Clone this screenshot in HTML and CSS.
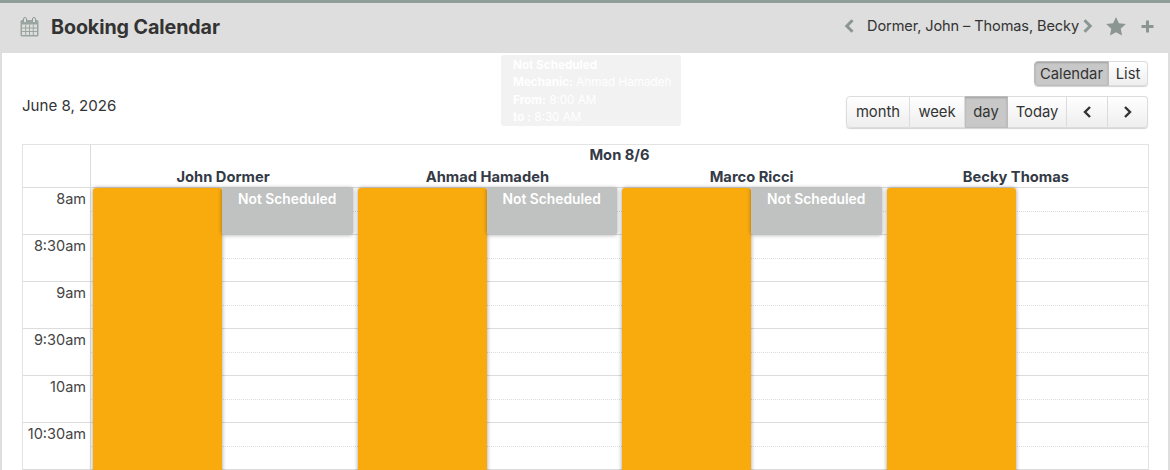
FILE: index.html
```html
<!DOCTYPE html>
<html lang="en">
<head>
<meta charset="utf-8">
<title>Booking Calendar</title>
<link rel="stylesheet" href="styles.css">
</head>
<body>
<header class="topbar">
  <div class="title">
    <svg class="cal-icon" width="19" height="20" viewBox="0 0 19 20">
      <rect x="0.5" y="3" width="18" height="16.5" rx="1.5" fill="#9aa5a0"/>
      <rect x="2" y="7.5" width="15" height="10.5" fill="#dedede"/>
      <path d="M2 11h15M2 14.500h15M5.700 7.500V18M9.500 7.500V18M13.300 7.500V18" stroke="#9aa5a0" stroke-width="1"/>
      <rect x="3.500" y="0.500" width="3" height="5.500" rx="1.500" fill="#dedede" stroke="#8f9b96"/>
      <rect x="12.500" y="0.500" width="3" height="5.500" rx="1.500" fill="#dedede" stroke="#8f9b96"/>
    </svg>
    <h1>Booking Calendar</h1>
  </div>
  <div class="range">
    <svg class="chev" width="10" height="14" viewBox="0 0 10 14"><path d="M8.500 1.200 2.800 7l5.700 5.800" fill="none" stroke="#8b9692" stroke-width="3"/></svg>
    <span class="range-text">Dormer, John – Thomas, Becky</span>
    <svg class="chev" width="10" height="14" viewBox="0 0 10 14"><path d="M1.500 1.200 7.200 7l-5.700 5.800" fill="none" stroke="#8b9692" stroke-width="3"/></svg>
    <svg class="star" width="20" height="19" viewBox="0 0 20 19"><path d="M10 0l2.900 6.300 6.900.8-5.100 4.700 1.400 6.800L10 15.200l-6.100 3.400 1.400-6.800L.2 7.100l6.900-.8z" fill="#8b9692"/></svg>
    <svg class="plus" width="13" height="13" viewBox="0 0 13 13"><path d="M6.500 0.500v12M0.500 6.500h12" stroke="#8b9692" stroke-width="3"/></svg>
  </div>
</header>
<main class="content">
  <div class="tooltip">
    <div><b>Not Scheduled</b></div>
    <div><b>Mechanic:</b> Ahmad Hamadeh</div>
    <div><b>From:</b> 8:00 AM</div>
    <div><b>to :</b> 8:30 AM</div>
  </div>
  <div class="toolbar">
    <div class="date">June 8, 2026</div>
    <div class="controls">
      <div class="btn-group small">
        <button class="btn w-cal active">Calendar</button><button class="btn w-list">List</button>
      </div>
      <div class="btn-group">
        <button class="btn w-month">month</button><button class="btn w-week">week</button><button class="btn w-day active">day</button><button class="btn w-today">Today</button><button class="btn w-prev"><svg width="10" height="12" viewBox="0 0 10 12"><path d="M8 1 3 6l5 5" fill="none" stroke="#333" stroke-width="2.400"/></svg></button><button class="btn w-next"><svg width="10" height="12" viewBox="0 0 10 12"><path d="M2 1l5 5-5 5" fill="none" stroke="#333" stroke-width="2.400"/></svg></button>
      </div>
    </div>
  </div>
  <section class="calendar">
    <div class="head">
      <div class="axis-head"></div>
      <div class="head-main">
        <div class="day-label">Mon 8/6</div>
        <div class="names">
          <div>John Dormer</div><div>Ahmad Hamadeh</div><div>Marco Ricci</div><div>Becky Thomas</div>
        </div>
      </div>
    </div>
    <div class="body">
      <div class="row"><div class="time">8am</div><div class="slot"></div></div>
      <div class="row"><div class="time">8:30am</div><div class="slot"></div></div>
      <div class="row"><div class="time">9am</div><div class="slot"></div></div>
      <div class="row"><div class="time">9:30am</div><div class="slot"></div></div>
      <div class="row"><div class="time">10am</div><div class="slot"></div></div>
      <div class="row"><div class="time">10:30am</div><div class="slot"></div></div>
      <div class="events">
        <div class="col"><div class="booked"></div><div class="unscheduled">Not Scheduled</div></div>
        <div class="col"><div class="booked"></div><div class="unscheduled">Not Scheduled</div></div>
        <div class="col"><div class="booked"></div><div class="unscheduled">Not Scheduled</div></div>
        <div class="col"><div class="booked"></div></div>
      </div>
    </div>
  </section>
</main>
</body>
</html>
```

FILE: styles.css
```css
* { box-sizing: border-box; }
html, body { margin: 0; height: 470px; overflow: hidden; }
body {
  background: #dedede;
  font-family: Inter, "Liberation Sans", sans-serif;
  color: #333;
  font-size: 14px;
}
.topbar {
  height: 53px;
  border-top: 3px solid #8f9e98;
  display: flex;
  align-items: center;
  justify-content: space-between;
  padding: 0 16px 4px 20px;
}
.title { display: flex; align-items: center; gap: 12px; margin-top: 2px; }
.cal-icon { display: block; }
h1 { margin: 0; font-size: 19.700px; font-weight: 700; color: #333; letter-spacing: -0.1px; }
.range { display: flex; align-items: center; }
.range-text { font-size: 14.550px; color: #333; margin: 0 4px 0 13px; letter-spacing: -0.1px; }
.chev { display: block; }
.star { margin-left: 13px; }
.plus { margin-left: 15px; }
.content {
  position: relative;
  height: 417px;
  margin: 0 2px;
  background: #fff;
  padding: 8px 19px 0 20px;
  overflow: hidden;
}
.tooltip {
  position: absolute;
  left: 499px;
  top: 2px;
  width: 180px;
  height: 71px;
  padding: 2px 12px;
  background: #f2f2f2;
  border-radius: 3px;
  color: #fff;
  font-size: 11.700px;
  line-height: 17.300px;
  white-space: nowrap;
}
.toolbar { display: flex; justify-content: space-between; height: 83px; }
.date { font-size: 15.100px; margin-top: 35px; color: #333; }
.controls { display: flex; flex-direction: column; align-items: flex-end; gap: 10px; margin-right: 1px; }
.btn-group { display: flex; height: 32px; border-radius: 4px; box-shadow: 0 1px 1px rgba(0,0,0,.18); }
.btn-group.small { height: 25px; }
.btn {
  font: inherit;
  font-size: 14.800px;
  color: #333;
  padding: 0;
  background: linear-gradient(#fff, #eeeeee);
  border: 1px solid #dcdcdc;
  border-left-width: 0;
  display: flex;
  align-items: center;
  justify-content: center;
}
.btn:first-child { border-left-width: 1px; border-radius: 4px 0 0 4px; }
.btn:last-child { border-radius: 0 4px 4px 0; }
.btn.active {
  background: #c8c8c8;
  border-color: #bcbcbc;
  box-shadow: inset 0 1px 2px rgba(0,0,0,.2);
}
.w-cal { width: 75px; }
.w-list { width: 39px; }
.w-month { width: 64px; }
.w-week { width: 55px; }
.w-day { width: 43px; }
.w-today { width: 59px; }
.w-prev { width: 41px; }
.w-next { width: 40px; }
.calendar {
  border: 1px solid #e3e3e3;
  border-bottom: 0;
}
.head { display: flex; height: 43px; border-bottom: 1px solid #dcdcdc; }
.axis-head { width: 68px; border-right: 1px solid #dcdcdc; }
.head-main { flex: 1; font-weight: 700; font-size: 14.700px; color: #343a46; }
.day-label { text-align: center; line-height: 21px; height: 22px; }
.names { display: grid; grid-template-columns: repeat(4, 1fr); line-height: 20px; text-align: center; }
.body { position: relative; }
.row { display: flex; height: 47px; border-bottom: 1px solid #dcdcdc; }
.time {
  width: 68px;
  height: 46px;
  flex: none;
  border-right: 1px solid #dcdcdc;
  text-align: right;
  padding: 2px 4px 0 0;
  font-size: 14.500px;
  line-height: 17px;
  color: #444;
}
.slot { flex: 1; height: 24px; border-bottom: 1px dotted #dcdcdc; }
.events {
  position: absolute;
  left: 67px;
  right: 0;
  top: 0;
  display: grid;
  grid-template-columns: repeat(4, 1fr);
  height: 300px;
}
.col { display: flex; align-items: flex-start; padding: 0 2px 0 3px; }
.booked {
  width: 129px;
  flex: none;
  height: 300px;
  background: #f9aa0d;
  border-radius: 3px 3px 0 0;
  box-shadow: 0 0 4px rgba(0,0,0,.4);
}
.unscheduled {
  flex: 1;
  height: 47px;
  background: #c0c2c1;
  border-radius: 0 0 3px 3px;
  box-shadow: 0 0 4px rgba(0,0,0,.35);
  color: #fff;
  font-size: 13.800px;
  font-weight: 600;
  text-align: center;
  line-height: 17px;
  padding-top: 3px;
}
```
